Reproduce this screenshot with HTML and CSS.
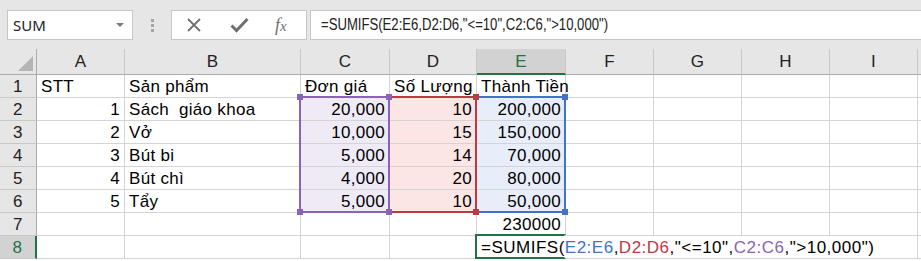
FILE: index.html
```html
<!DOCTYPE html>
<html lang="vi">
<head>
    <meta charset="UTF-8">
    <title>SUMIFS</title>
    <link rel="stylesheet" href="styles.css">
</head>
<body>
    <div class="toolbar">
        <div class="name-box">
            <span>SUM</span>
            <span class="caret"></span>
        </div>
        <div class="grip"><i></i><i></i><i></i></div>
        <div class="fx-buttons">
            <svg width="16" height="16" viewBox="0 0 16 16">
                <path d="M2 2 L14 14 M14 2 L2 14" stroke="#6f6f6f" stroke-width="1.8" fill="none"/>
            </svg>
            <svg width="19" height="16" viewBox="0 0 19 16">
                <path d="M1.5 8.5 L6.5 13.5 L17.5 2" stroke="#6f6f6f" stroke-width="3" fill="none"/>
            </svg>
            <span class="fx"><em>f</em><em>x</em></span>
        </div>
        <div class="formula"><span>=SUMIFS(E2:E6,D2:D6,"&lt;=10",C2:C6,"&gt;10,000")</span></div>
    </div>

    <div class="sheet">
        <div class="cells">
            <!-- header row -->
            <div class="corner"><span></span></div>
            <div class="ch">A</div>
            <div class="ch">B</div>
            <div class="ch">C</div>
            <div class="ch">D</div>
            <div class="ch sel">E</div>
            <div class="ch">F</div>
            <div class="ch">G</div>
            <div class="ch">H</div>
            <div class="ch">I</div>
            <div class="ch"></div>

            <!-- row 1 -->
            <div class="rh">1</div>
            <div class="c">STT</div>
            <div class="c">Sản phẩm</div>
            <div class="c">Đơn giá</div>
            <div class="c">Số Lượng</div>
            <div class="c">Thành Tiền</div>
            <div class="c"></div><div class="c"></div><div class="c"></div><div class="c"></div><div class="c"></div>

            <!-- row 2 -->
            <div class="rh">2</div>
            <div class="c r">1</div>
            <div class="c">Sách&nbsp; giáo khoa</div>
            <div class="c r fill-c">20,000</div>
            <div class="c r fill-d">10</div>
            <div class="c r fill-e">200,000</div>
            <div class="c"></div><div class="c"></div><div class="c"></div><div class="c"></div><div class="c"></div>

            <!-- row 3 -->
            <div class="rh">3</div>
            <div class="c r">2</div>
            <div class="c">Vở</div>
            <div class="c r fill-c">10,000</div>
            <div class="c r fill-d">15</div>
            <div class="c r fill-e">150,000</div>
            <div class="c"></div><div class="c"></div><div class="c"></div><div class="c"></div><div class="c"></div>

            <!-- row 4 -->
            <div class="rh">4</div>
            <div class="c r">3</div>
            <div class="c">Bút bi</div>
            <div class="c r fill-c">5,000</div>
            <div class="c r fill-d">14</div>
            <div class="c r fill-e">70,000</div>
            <div class="c"></div><div class="c"></div><div class="c"></div><div class="c"></div><div class="c"></div>

            <!-- row 5 -->
            <div class="rh">5</div>
            <div class="c r">4</div>
            <div class="c">Bút chì</div>
            <div class="c r fill-c">4,000</div>
            <div class="c r fill-d">20</div>
            <div class="c r fill-e">80,000</div>
            <div class="c"></div><div class="c"></div><div class="c"></div><div class="c"></div><div class="c"></div>

            <!-- row 6 -->
            <div class="rh">6</div>
            <div class="c r">5</div>
            <div class="c">Tẩy</div>
            <div class="c r fill-c">5,000</div>
            <div class="c r fill-d">10</div>
            <div class="c r fill-e">50,000</div>
            <div class="c"></div><div class="c"></div><div class="c"></div><div class="c"></div><div class="c"></div>

            <!-- row 7 -->
            <div class="rh">7</div>
            <div class="c"></div>
            <div class="c"></div>
            <div class="c"></div>
            <div class="c"></div>
            <div class="c r">230000</div>
            <div class="c"></div><div class="c"></div><div class="c"></div><div class="c"></div><div class="c"></div>

            <!-- row 8 -->
            <div class="rh sel">8</div>
            <div class="c"></div>
            <div class="c"></div>
            <div class="c"></div>
            <div class="c"></div>
            <div class="c editing">=SUMIFS(<span class="ref-e">E2:E6</span>,<span class="ref-d">D2:D6</span>,"&lt;=10",<span class="ref-c">C2:C6</span>,"&gt;10,000")</div>
            <div class="c"></div>
        </div>

        <!-- reference highlights, same grid on top of the cells -->
        <div class="marks">
            <div class="range range-e"><i class="tl"></i><i class="tr"></i><i class="bl"></i><i class="br"></i></div>
            <div class="range range-d"><i class="tl"></i><i class="tr"></i><i class="bl"></i><i class="br"></i></div>
            <div class="range range-c"><i class="tl"></i><i class="tr"></i><i class="bl"></i><i class="br"></i></div>
            <div class="active"></div>
        </div>
    </div>
</body>
</html>
```

FILE: styles.css
```css
body {
    margin: 0;
    background-color: #fff;
    font-family: "Liberation Sans", Arial, sans-serif;
    color: #000;
    overflow: hidden;
}

/* formula bar */
.toolbar {
    height: 49px;
    background-color: #e6e6e6;
    display: flex;
    align-items: flex-start;
    padding-top: 10px;
    box-sizing: border-box;
}

.name-box {
    margin-left: 7px;
    width: 126px;
    height: 30px;
    box-sizing: border-box;
    background-color: #fff;
    border: 1px solid #c6c6c6;
    display: flex;
    align-items: center;
    justify-content: space-between;
    padding: 0 8px 0 5px;
    font-family: "Noto Sans", "Open Sans", sans-serif;
    font-size: 15px;
    color: #222;
}

.caret {
    width: 0;
    height: 0;
    border-left: 4px solid transparent;
    border-right: 4px solid transparent;
    border-top: 4px solid #7a7a7a;
}

.grip {
    width: 38px;
    height: 30px;
    display: flex;
    flex-direction: column;
    align-items: center;
    justify-content: center;
    gap: 2px;
}

.grip i {
    width: 3px;
    height: 3px;
    background-color: #a6a6a6;
}

.fx-buttons {
    width: 136px;
    height: 30px;
    box-sizing: border-box;
    background-color: #fff;
    border: 1px solid #c6c6c6;
    display: flex;
    align-items: center;
    padding-left: 14px;
    gap: 28px;
}

.fx {
    font-family: "Liberation Serif", serif;
    font-size: 18px;
    color: #707070;
    margin-left: -2px;
}

.fx em:last-child {
    font-size: 15px;
}

.formula {
    flex: 1;
    margin-left: 3px;
    height: 30px;
    box-sizing: border-box;
    background-color: #fff;
    border: 1px solid #c6c6c6;
    border-right: none;
    padding-left: 10px;
    line-height: 28px;
    font-size: 16px;
    color: #222;
    white-space: nowrap;
}

/* no narrow face installed, so squeeze the regular one */
.formula span {
    display: inline-block;
    transform: scaleX(0.82);
    transform-origin: left center;
}

/* grid */
.sheet {
    display: grid;
}

.cells, .marks {
    grid-area: 1 / 1;
    display: grid;
    grid-template-columns: 37px 88px 176px 89px 87px 89px 88px 88px 88px 88px 1fr;
    grid-template-rows: 26px repeat(8, 23px) 8px;
}

.cells {
    font-size: 17px;
    letter-spacing: 0.3px;
}

.marks {
    pointer-events: none;
}

.corner, .ch, .rh, .c {
    box-sizing: border-box;
}

.corner {
    background-color: #e6e6e6;
    border-right: 1px solid #ababab;
    border-bottom: 1px solid #ababab;
    position: relative;
}

.corner span {
    position: absolute;
    right: 3px;
    bottom: 3px;
    width: 0;
    height: 0;
    border-left: 15px solid transparent;
    border-bottom: 15px solid #b4b4b4;
}

.ch {
    background-color: #e6e6e6;
    border-right: 1px solid #c8c8c8;
    border-bottom: 1px solid #ababab;
    text-align: center;
    line-height: 25px;
    color: #222;
}

.ch.sel {
    background-color: #d2d2d2;
    color: #217346;
    border-bottom: 2px solid #217346;
}

.rh {
    background-color: #e6e6e6;
    border-right: 1px solid #ababab;
    border-bottom: 1px solid #c8c8c8;
    text-align: center;
    line-height: 23px;
    color: #222;
}

.rh.sel {
    background-color: #d2d2d2;
    color: #217346;
    border-right: 2px solid #217346;
}

.c {
    border-right: 1px solid #d4d4d4;
    border-bottom: 1px solid #d4d4d4;
    padding: 0 4px;
    line-height: 23px;
    white-space: nowrap;
}

.c.r {
    text-align: right;
}

.fill-c { background-color: #eeeaf6; }
.fill-d { background-color: #fbe5e5; }
.fill-e { background-color: #e8eef9; }

.c.editing {
    grid-column: 6 / 11;
    padding-left: 4px;
    letter-spacing: 0.5px;
}

.ref-e { color: #4472c4; }
.ref-d { color: #c0393f; }
.ref-c { color: #8a63b5; }

/* reference outlines */
.range {
    grid-row: 3 / 8;
    margin: -2px 0 0 -2px;
    border: 2px solid;
    position: relative;
}

.range i {
    position: absolute;
    width: 6px;
    height: 6px;
    background-color: currentColor;
}

.range .tl { left: -4px; top: -4px; }
.range .tr { right: -4px; top: -4px; }
.range .bl { left: -4px; bottom: -4px; }
.range .br { right: -4px; bottom: -4px; }

.range-e {
    grid-column: 6;
    color: #4472c4;
    z-index: 1;
}

.range-d {
    grid-column: 5;
    color: #c0393f;
    z-index: 2;
}

.range-c {
    grid-column: 4;
    color: #8a63b5;
    z-index: 3;
}

.active {
    grid-column: 6;
    grid-row: 9;
    margin: -2px 0 0 -2px;
    border: 2px solid #217346;
    border-right-color: transparent;
    z-index: 4;
}
```
